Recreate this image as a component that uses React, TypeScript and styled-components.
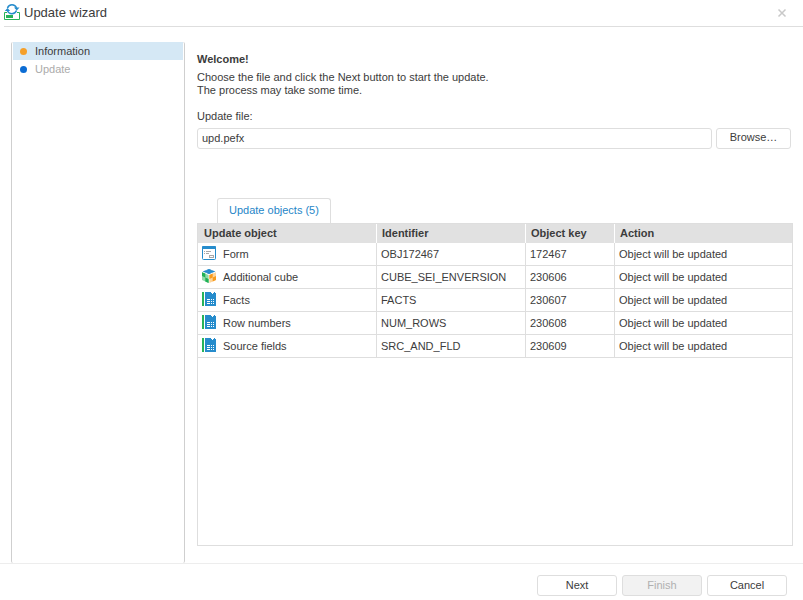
import React, { useState } from "react";
import styled, { createGlobalStyle } from "styled-components";

const GlobalStyle = createGlobalStyle`
  *, *::before, *::after { box-sizing: border-box; }
  body {
    margin: 0;
    background: #fff;
    color: #3c3c3c;
    font: 11px/13px "Liberation Sans", Arial, sans-serif;
  }
  button, input { font: inherit; color: inherit; }
`;

const Wizard = styled.div`
  display: flex;
  flex-direction: column;
  min-height: 100vh;
`;

const TitleBar = styled.header`
  display: flex;
  align-items: center;
  gap: 4px;
  height: 27px;
  margin-left: 4px;
  padding-right: 14px;
  border-bottom: 1px solid #dedede;

  > svg { margin-bottom: 2px; }
`;

const Title = styled.h1`
  flex: 1;
  margin: 0;
  font-size: 13px;
  line-height: 18px;
  font-weight: 400;
`;

const CloseButton = styled.button`
  display: flex;
  padding: 2px;
  border: 0;
  background: none;
  color: #c9c9c9;
  cursor: pointer;
`;

const Main = styled.div`
  flex: 1;
  display: flex;
  gap: 12px;
  padding: 15px 10px 0 11px;
  border-bottom: 1px solid #ededed;
`;

const Steps = styled.ol`
  flex: none;
  width: 174px;
  margin: 0;
  padding: 0 1px;
  list-style: none;
  border: solid #cfcfcf;
  border-width: 0 1px;
  border-radius: 2px;
`;

const Step = styled.li<{ $current?: boolean }>`
  display: flex;
  align-items: center;
  gap: 8px;
  height: 18px;
  padding-left: 7px;
  background: ${(p) => (p.$current ? "#d5e8f5" : "transparent")};
  color: ${(p) => (p.$current ? "#3c3c3c" : "#ababab")};

  &::before {
    content: "";
    width: 7px;
    height: 7px;
    border-radius: 50%;
    background: ${(p) => (p.$current ? "#f5a02a" : "#0b6cd4")};
  }
`;

const Content = styled.main`
  flex: 1;
  min-width: 0;
  display: flex;
  flex-direction: column;
  padding: 11px 0 17px;
`;

const Heading = styled.h2`
  margin: 0 0 5px;
  font-size: 11px;
  line-height: 13px;
`;

const Intro = styled.p`
  margin: 0 0 13px;
`;

const FieldLabel = styled.label`
  margin-bottom: 5px;
`;

const FileRow = styled.div`
  display: flex;
  gap: 4px;
  padding-right: 2px;
  margin-bottom: 49px;
`;

const FileInput = styled.input`
  flex: 1;
  min-width: 0;
  height: 21px;
  padding: 0 4px 2px;
  border: 1px solid #dedede;
  border-radius: 3px;
  background: #fff;
`;

const Button = styled.button<{ $width?: number }>`
  width: ${(p) => p.$width ?? 80}px;
  height: 21px;
  padding: 0 0 1px;
  border: 1px solid #dedede;
  border-radius: 3px;
  background: #fff;
  cursor: pointer;

  &:disabled {
    background: #f2f2f2;
    color: #b0b0b0;
    cursor: default;
  }
`;

const BrowseButton = styled(Button)`
  padding-bottom: 3px;
`;

const TabList = styled.div`
  display: flex;
  padding-left: 20px;
`;

const Tab = styled.button`
  height: 25px;
  padding: 0 11px 2px;
  border: 1px solid #dedede;
  border-bottom: 0;
  border-radius: 3px 3px 0 0;
  background: #fff;
  color: #1f86c8;
  cursor: pointer;
`;

const Panel = styled.div`
  flex: 1;
  border: 1px solid #dedede;
`;

const Table = styled.table`
  width: 100%;
  table-layout: fixed;
  border-collapse: separate;
  border-spacing: 0;
`;

const HeadCell = styled.th<{ $width?: number }>`
  width: ${(p) => (p.$width ? `${p.$width}px` : "auto")};
  height: 19px;
  padding: 0 5px;
  background: #e1e1e1;
  border-right: 1px solid #fff;
  text-align: left;

  &:first-child { padding-left: 6px; }
  &:last-child { border-right: 0; }
`;

const Cell = styled.td`
  height: 23px;
  padding: 0 4px;
  border: solid #dedede;
  border-width: 0 1px 1px 0;
  white-space: nowrap;

  &:last-child { border-right: 0; }
`;

const ObjectName = styled.span`
  display: flex;
  align-items: center;
  gap: 7px;

  svg {
    flex: none;
    margin-bottom: 2px;
  }
`;

const Footer = styled.footer`
  display: flex;
  justify-content: flex-end;
  gap: 5px;
  padding: 11px 16px 4px;
`;

const UpdateIcon = () => (
  <svg width="16" height="16" viewBox="0 0 16 16" fill="none" aria-hidden="true">
    <path d="M3.500 4C4.300 1.800 6 .8 8 .8s3.700 1 4.500 3.200M12.500 6.500C11.700 8.700 10 9.700 8 9.700S4.300 8.700 3.500 7" stroke="#268ccc" strokeWidth="1.500" />
    <path d="M10 3.500h5.500L12.800 6.500zM.8 7L3.500 4l2.700 3z" fill="#268ccc" />
    <path d="M3 8.500H.5v7h15v-7H13" stroke="#27b359" />
    <path d="M2 11h7v3H2z" fill="#27b359" />
  </svg>
);

const FormIcon = () => (
  <svg width="14" height="14" viewBox="0 0 14 14" fill="none" aria-hidden="true">
    <rect x="0.5" y="0.5" width="13" height="13" rx="1" fill="#fff" stroke="#268ccc" />
    <path d="M0 1a1 1 0 0 1 1-1h12a1 1 0 0 1 1 1v2H0z" fill="#268ccc" />
    <path d="M2 5.500h1M4 5.500h5M2 7.500h1M4 7.500h3" stroke="#a8a8a8" />
    <rect x="7.500" y="9.500" width="4" height="2" stroke="#a8a8a8" />
  </svg>
);

const CubeIcon = () => (
  <svg width="14" height="14" viewBox="0 0 14 14" aria-hidden="true">
    <path d="M7 0l6.500 2.500L7 5 .5 2.500z" fill="#79bbe3" />
    <path d="M7 0l3 1.200-3 1.300-3-1.300zM7 2.500l3 1.200L7 5 4 3.700zM3.700 1.500L7 2.500 3.700 3.600.8 2.500zM10.300 1.500l2.900 1-2.900 1.100L7 2.500z" fill="#2389cb" />
    <path d="M0 3.200l6.600 2.700V14L0 11z" fill="#8fdaa8" />
    <path d="M0 3.200l3.300 1.400V8.500L0 7.100zM3.300 8.500l3.300 1.400V14l-3.300-1.500z" fill="#1fb055" />
    <path d="M14 3.200L7.400 5.900V14L14 11z" fill="#fdd49a" />
    <path d="M10.700 4.600L7.400 5.900v4l3.300-1.400zM14 7.100l-3.300 1.400v4L14 11z" fill="#f99b1c" />
  </svg>
);

const BookIcon = () => (
  <svg width="14" height="14" viewBox="0 0 14 14" fill="none" aria-hidden="true">
    <path d="M0 0h2v14H0z" fill="#27b359" />
    <path d="M3 0h6v1h1v1h1V1h1V0h1v1h1v13H3z" fill="#268ccc" />
    <path d="M5 7.500h3M5 9.500h3M5 11.500h3M9 7.500h1M11 7.500h1M9 9.500h1M11 9.500h1M9 11.500h1M11 11.500h1" stroke="#fff" />
  </svg>
);

const objects = [
  { Icon: FormIcon, name: "Form", id: "OBJ172467", key: "172467" },
  { Icon: CubeIcon, name: "Additional cube", id: "CUBE_SEI_ENVERSION", key: "230606" },
  { Icon: BookIcon, name: "Facts", id: "FACTS", key: "230607" },
  { Icon: BookIcon, name: "Row numbers", id: "NUM_ROWS", key: "230608" },
  { Icon: BookIcon, name: "Source fields", id: "SRC_AND_FLD", key: "230609" },
];

export default function App() {
  const [file, setFile] = useState("upd.pefx");

  return (
    <Wizard>
      <GlobalStyle />
      <TitleBar>
        <UpdateIcon />
        <Title>Update wizard</Title>
        <CloseButton type="button" aria-label="Close">
          <svg width="10" height="10" viewBox="0 0 10 10" aria-hidden="true">
            <path d="M1.500 1.500l7 7M8.500 1.500l-7 7" stroke="currentColor" strokeWidth="1.500" />
          </svg>
        </CloseButton>
      </TitleBar>
      <Main>
        <Steps>
          <Step $current aria-current="step">Information</Step>
          <Step>Update</Step>
        </Steps>
        <Content>
          <Heading>Welcome!</Heading>
          <Intro>
            Choose the file and click the Next button to start the update.
            <br />
            The process may take some time.
          </Intro>
          <FieldLabel htmlFor="update-file">Update file:</FieldLabel>
          <FileRow>
            <FileInput id="update-file" type="text" value={file} onChange={(e) => setFile(e.target.value)} />
            <BrowseButton type="button" $width={75}>Browse…</BrowseButton>
          </FileRow>
          <TabList role="tablist">
            <Tab type="button" role="tab" id="objects-tab" aria-selected="true" aria-controls="objects-panel">
              Update objects (5)
            </Tab>
          </TabList>
          <Panel role="tabpanel" id="objects-panel" aria-labelledby="objects-tab">
            <Table>
              <thead>
                <tr>
                  <HeadCell $width={179}>Update object</HeadCell>
                  <HeadCell $width={149}>Identifier</HeadCell>
                  <HeadCell $width={89}>Object key</HeadCell>
                  <HeadCell>Action</HeadCell>
                </tr>
              </thead>
              <tbody>
                {objects.map(({ Icon, name, id, key }) => (
                  <tr key={key}>
                    <Cell><ObjectName><Icon />{name}</ObjectName></Cell>
                    <Cell>{id}</Cell>
                    <Cell>{key}</Cell>
                    <Cell>Object will be updated</Cell>
                  </tr>
                ))}
              </tbody>
            </Table>
          </Panel>
        </Content>
      </Main>
      <Footer>
        <Button type="button">Next</Button>
        <Button type="button" disabled>Finish</Button>
        <Button type="button">Cancel</Button>
      </Footer>
    </Wizard>
  );
}
